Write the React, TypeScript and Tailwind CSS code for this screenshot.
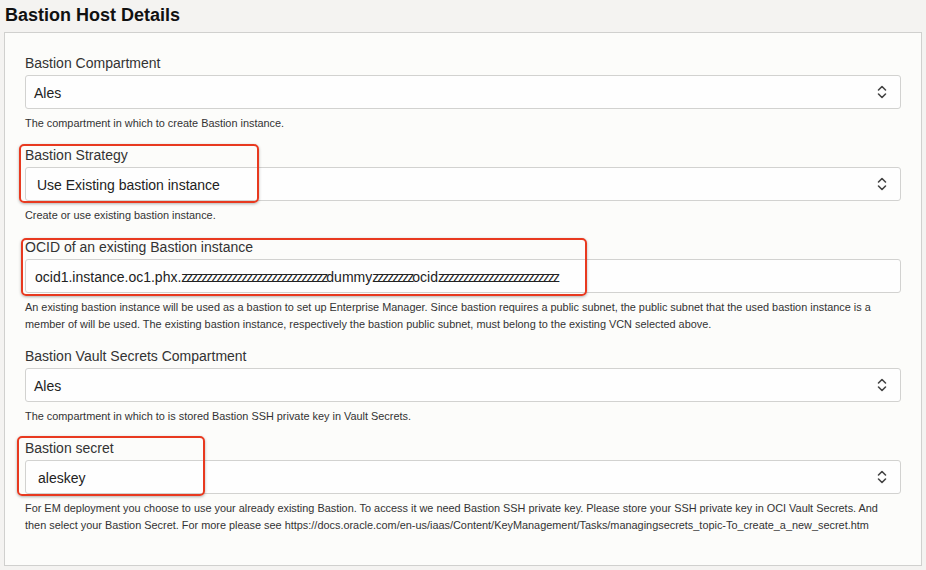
import React from "react";

const Chevrons = () => (
  <svg width="12" height="16" viewBox="0 0 12 16" fill="none" stroke="#444" strokeWidth="1.6" strokeLinecap="round" strokeLinejoin="round">
    <path d="M2.5 6 L6 2.5 L9.5 6" />
    <path d="M2.5 10 L6 13.5 L9.5 10" />
  </svg>
);

const Z = ({ n }: { n: number }) => (
  <span className="tracking-[-2px]">{"z".repeat(n)}</span>
);

function Field({
  label,
  value,
  help,
  select = true,
}: {
  label: string;
  value: React.ReactNode;
  help: React.ReactNode;
  select?: boolean;
}) {
  return (
    <div className="flex flex-col">
      <div className="h-[20px] leading-[20px] text-[14px] text-[#333]">{label}</div>
      <div className="mt-[2px] h-[34px] flex items-center justify-between border border-[#d2d2d0] rounded-[3px] bg-[#fefefe] pl-[8px] pr-[12px]">
        <div className="pt-[2px] text-[14px] text-[#222] whitespace-nowrap">{value}</div>
        {select && <Chevrons />}
      </div>
      <div className="mt-[6px] text-[10.9px] leading-[17px] text-[#333] whitespace-nowrap">{help}</div>
    </div>
  );
}

export default function App() {
  return (
    <div className="w-[926px] h-[570px] bg-[#f4f3f1] overflow-hidden" style={{ fontFamily: '"Liberation Sans", Arial, sans-serif' }}>
      <div className="pl-[5px] pt-[4px] h-[32px] text-[18px] font-bold text-[#111] leading-[22px]">Bastion Host Details</div>
      <div className="ml-[4px] w-[918px] h-[534px] border border-[#d0d0ce] bg-[#fcfcfa] pt-[20px] pl-[20px] pr-[20px]">
        <div className="flex flex-col gap-[13px]">
          <Field label="Bastion Compartment" value="Ales" help="The compartment in which to create Bastion instance." />
          <div className="relative">
            <div className="absolute left-[-6px] top-[-1px] w-[240px] h-[59px] border-2 border-[#e8391f] rounded-[5px] shadow-[0_1px_3px_rgba(0,0,0,0.3)] pointer-events-none" />
            <Field
              label="Bastion Strategy"
              value={<span className="pl-[3px]">Use Existing bastion instance</span>}
              help="Create or use existing bastion instance."
            />
          </div>
          <div className="relative">
            <div className="absolute left-[-4px] top-[1px] w-[566px] h-[58px] border-2 border-[#e8391f] rounded-[5px] shadow-[0_1px_3px_rgba(0,0,0,0.3)] pointer-events-none" />
            <Field
              select={false}
              label="OCID of an existing Bastion instance"
              value={
                <span className="pl-[1px]">
                  ocid1.instance.oc1.phx.<Z n={29} />dummy<Z n={8} />ocid<Z n={24} />
                </span>
              }
              help={
                <>
                  An existing bastion instance will be used as a bastion to set up Enterprise Manager. Since bastion requires a public subnet, the public subnet that the used bastion instance is a
                  <br />
                  member of will be used. The existing bastion instance, respectively the bastion public subnet, must belong to the existing VCN selected above.
                </>
              }
            />
          </div>
          <Field
            label="Bastion Vault Secrets Compartment"
            value="Ales"
            help="The compartment in which to is stored Bastion SSH private key in Vault Secrets."
          />
          <div className="relative">
            <div className="absolute left-[-8px] top-[-2px] w-[188px] h-[60px] border-2 border-[#e8391f] rounded-[5px] shadow-[0_1px_3px_rgba(0,0,0,0.3)] pointer-events-none" />
            <Field
              label="Bastion secret"
              value={<span className="pl-[4px]">aleskey</span>}
              help={
                <>
                  For EM deployment you choose to use your already existing Bastion. To access it we need Bastion SSH private key. Please store your SSH private key in OCI Vault Secrets. And
                  <br />
                  then select your Bastion Secret. For more please see https://docs.oracle.com/en-us/iaas/Content/KeyManagement/Tasks/managingsecrets_topic-To_create_a_new_secret.htm
                </>
              }
            />
          </div>
        </div>
      </div>
    </div>
  );
}
